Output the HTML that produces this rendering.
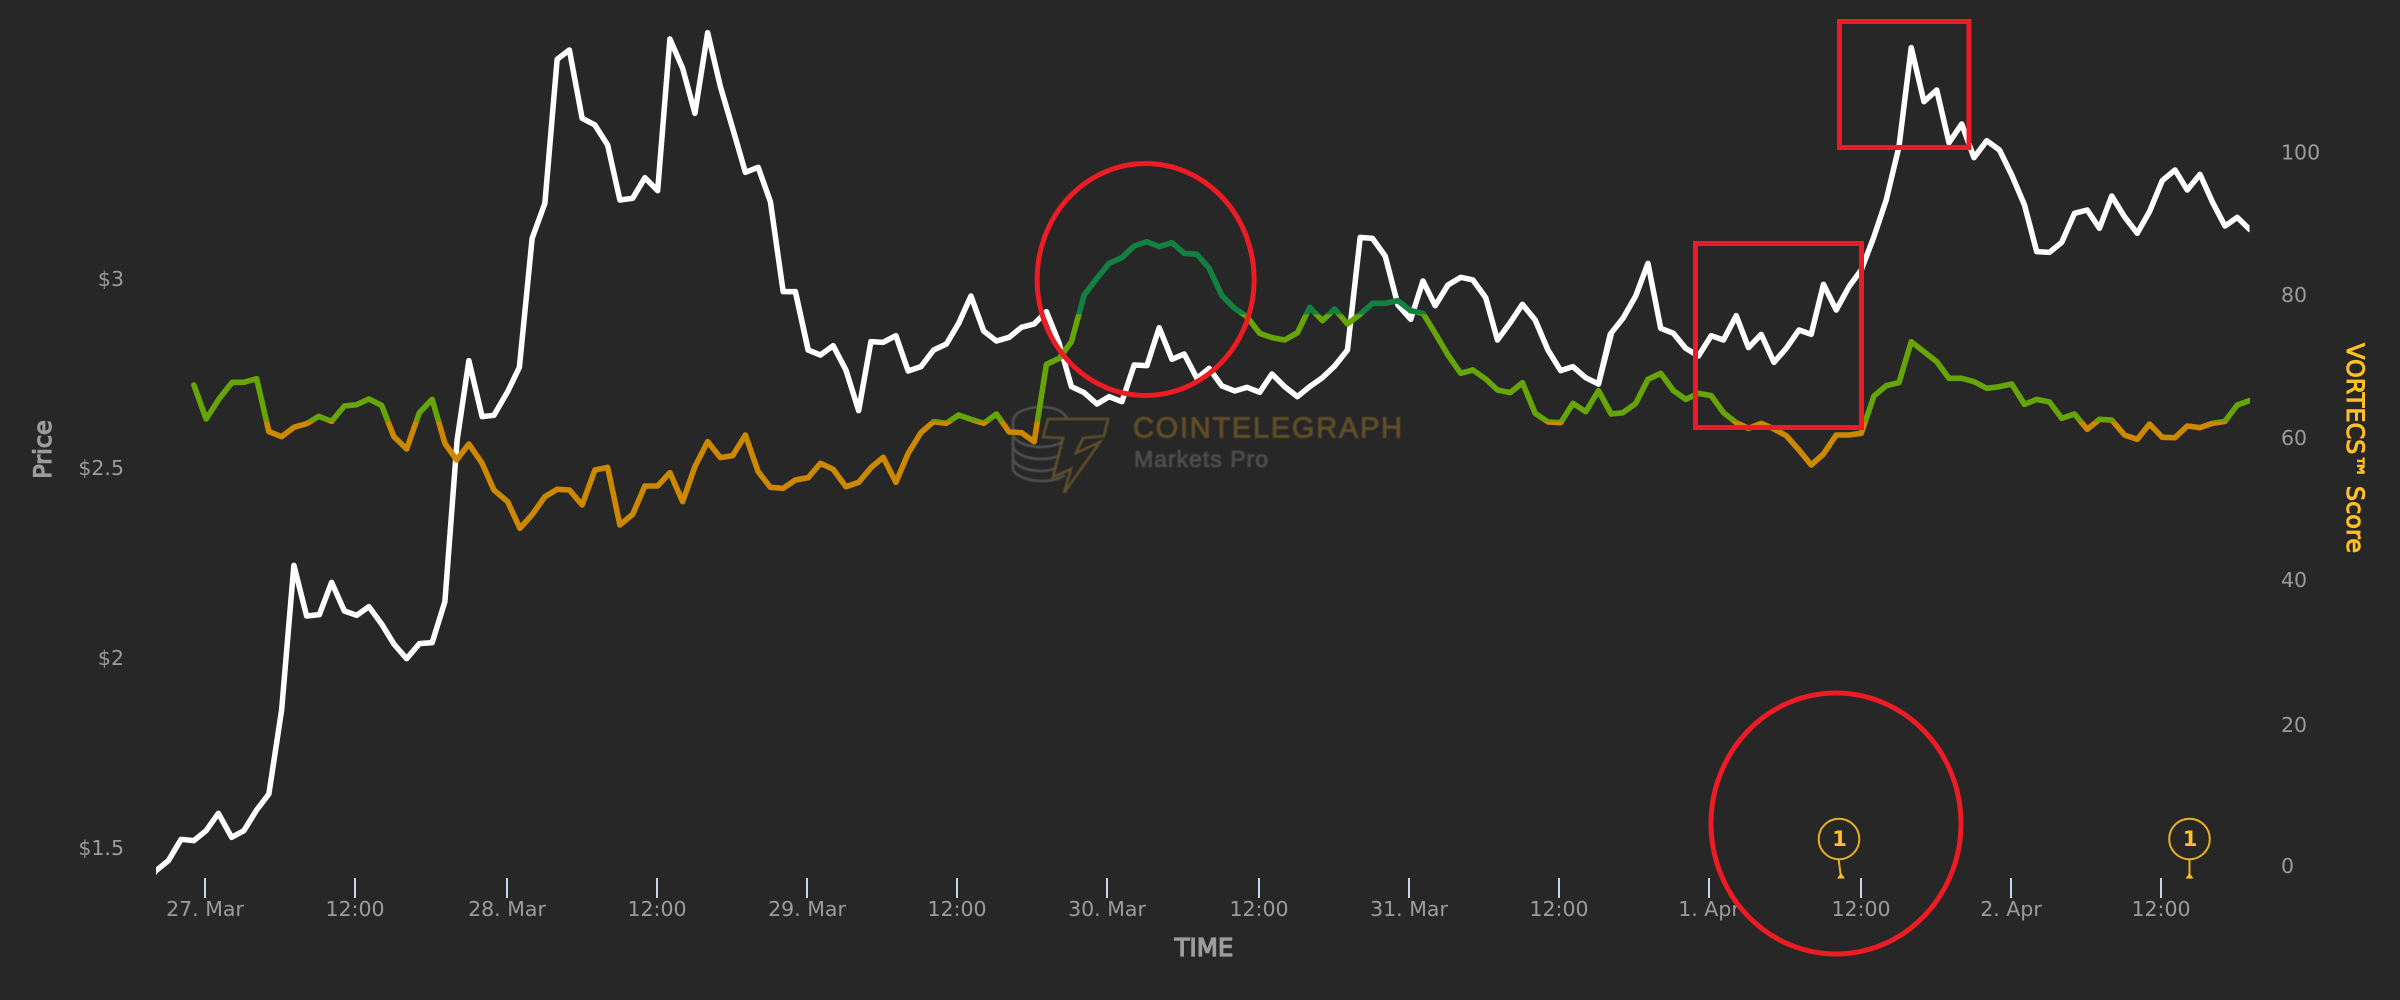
<!DOCTYPE html>
<html><head><meta charset="utf-8"><title>VORTECS chart</title>
<style>
html,body{margin:0;padding:0;background:#272727;width:2400px;height:1000px;overflow:hidden}
svg{display:block;position:absolute;left:0;top:0}
text{font-family:"DejaVu Sans","Liberation Sans",sans-serif}
.l{font-size:20.5px;fill:#9c9c9c}
.x{text-anchor:middle}
.r{text-anchor:end}
polyline{fill:none;stroke-linejoin:round;stroke-linecap:round;vector-effect:non-scaling-stroke}
</style></head><body>
<svg width="2400" height="1000" viewBox="0 0 2400 1000" xmlns="http://www.w3.org/2000/svg">
<defs>
<filter id="soft" x="-5%" y="-5%" width="110%" height="110%"><feGaussianBlur stdDeviation="0.55"/></filter>
<clipPath id="plot"><rect x="156" y="0" width="2093.5" height="880"/></clipPath>
<clipPath id="zd"><rect x="156" y="0" width="2094" height="314.3"/></clipPath>
<clipPath id="zg"><rect x="156" y="314.3" width="2094" height="107"/></clipPath>
<clipPath id="zo"><rect x="156" y="421.3" width="2094" height="400"/></clipPath>
<g id="v">
<g transform="scale(.5102,.33333)"><polyline points="380,1155 404,1257 430,1195 455,1147 478,1147 503,1136 527,1295 552,1310 576,1282 601,1271 625,1249 650,1264 675,1218 699,1214 723,1197 748,1216 772,1310 797,1347 822,1238 847,1198 872,1330 895,1380 919,1332 945,1390 968,1470 995,1505 1019,1585 1044,1542 1068,1490 1092,1468 1116,1470 1141,1515 1166,1410 1191,1402 1215,1575 1240,1543 1264,1458 1289,1458 1313,1418 1338,1505 1362,1400 1387,1325 1412,1373 1436,1367 1461,1305 1486,1415 1510,1462 1535,1465 1559,1440 1584,1433"/></g>
<g transform="translate(800,0) scale(.5102,.33333)"><polyline points="-9,1440 16,1433 40,1390 65,1408 90,1460 115,1447 139,1403 163,1372 188,1447 212,1360 237,1298 262,1265 287,1270 311,1245 335,1258 360,1270 385,1242 410,1296 434,1298 459,1325 483,1093 508,1075 532,1025 557,885 582,835 606,790 631,773 655,738 680,725 704,740 729,728 753,760 778,763 802,805 827,887 852,925 876,950 901,1000 925,1013 950,1020 975,998 999,922 1024,962 1048,927 1073,972 1098,943 1122,910 1147,910 1172,902 1197,932 1221,940 1245,1000 1270,1065 1295,1120 1319,1110 1344,1137 1367,1170 1392,1178 1416,1148 1441,1240 1466,1266 1491,1268 1515,1210 1540,1235 1565,1172 1590,1242"/></g>
<g transform="translate(1600,0) scale(.5102,.33333)"><polyline points="-3,1172 22,1242 45,1238 70,1210 94,1138 119,1120 144,1172 168,1198 193,1180 218,1187 242,1238 267,1268 291,1285 316,1270 341,1287 365,1307 390,1350 414,1395 438,1362 463,1305 488,1305 512,1300 537,1188 561,1157 586,1148 610,1025 635,1055 660,1085 684,1135 709,1135 733,1145 758,1165 783,1160 807,1152 832,1213 856,1198 881,1206 905,1255 930,1242 955,1288 979,1258 1003,1260 1028,1305 1053,1318 1077,1272 1102,1312 1127,1313 1151,1278 1176,1283 1200,1270 1225,1264 1249,1215 1273,1202"/></g>
</g>
</defs>
<rect width="2400" height="1000" fill="#272727"/>

<!-- watermark -->
<g filter="url(#soft)">
<g fill="none" stroke="#505050" stroke-width="2.6">
<path d="M1013 470V422C1013 413 1025 407 1042 407C1054 407 1064 411 1068 420"/>
<path d="M1013 435C1017 444 1030 447 1042 447C1050 447 1057 445 1062 442"/>
<path d="M1013 447C1017 456 1030 459 1042 459C1048 459 1055 458 1060 455"/>
<path d="M1013 459C1017 468 1030 471 1042 471C1048 471 1053 470 1057 467"/>
<path d="M1013 470C1017 477 1030 481 1042 481C1051 481 1059 479 1065 475"/>
</g>
<path d="M1048 419L1108 419L1104 436L1083 438L1076 453L1100 442L1064 493L1071 469L1053 477L1063 438L1043 437Z" fill="none" stroke="#5e4e2a" stroke-width="2.6"/>
<text x="1133" y="437.5" textLength="269" lengthAdjust="spacing" style="font-family:'Liberation Sans',sans-serif;font-size:29px;fill:#604e26;stroke:#604e26;stroke-width:.9">COINTELEGRAPH</text>
<text x="1134" y="467" textLength="134" lengthAdjust="spacing" style="font-family:'Liberation Sans',sans-serif;font-size:23px;fill:#4e4e4e;stroke:#4e4e4e;stroke-width:.8">Markets Pro</text>
</g>

<!-- ticks -->
<g stroke="#ccd6eb" stroke-width="2">
<path d="M205 878V898M355 878V898M507 878V898M657 878V898M807 878V898M957 878V898M1107 878V898M1259 878V898M1409 878V898M1559 878V898M1709 878V898M1861 878V898M2011 878V898M2161 878V898"/>
</g>

<!-- white price line -->
<g clip-path="url(#plot)">
<g transform="scale(.5102,.33333)"><polyline stroke="#fff" stroke-width="5.5" points="295,2632 306,2612 330,2582 355,2518 380,2522 404,2492 428,2440 454,2512 478,2492 503,2430 527,2382 552,2130 576,1696 601,1848 626,1844 650,1747 675,1833 699,1846 723,1820 748,1872 772,1932 797,1976 822,1931 847,1928 872,1805 896,1320 919,1082 945,1250 968,1246 995,1175 1018,1102 1043,715 1068,610 1092,178 1116,150 1141,355 1166,375 1191,435 1215,600 1240,595 1264,533 1289,572 1313,117 1338,205 1362,340 1387,98 1412,260 1436,385 1461,517 1486,502 1510,605 1535,875 1559,875 1584,1050 1608,1065"/></g>
<g transform="translate(800,0) scale(.5102,.33333)"><polyline stroke="#fff" stroke-width="5.5" points="-9,875 16,1050 40,1065 65,1037 90,1110 115,1232 139,1025 163,1027 188,1007 212,1113 237,1100 262,1050 287,1032 311,970 335,888 360,993 385,1023 410,1012 434,982 459,972 483,935 508,1030 532,1160 557,1178 582,1212 606,1190 631,1205 655,1095 680,1097 704,983 729,1078 753,1062 778,1135 802,1105 827,1158 852,1173 876,1162 901,1177 925,1122 950,1160 975,1190 999,1160 1024,1133 1048,1098 1073,1050 1098,712 1122,715 1147,768 1172,915 1197,958 1221,843 1245,917 1270,855 1295,832 1319,840 1344,893 1367,1020 1392,968 1416,913 1441,960 1466,1050 1491,1112 1515,1100 1540,1133 1565,1152 1590,1003"/></g>
<g transform="translate(1600,0) scale(.5102,.33333)"><polyline stroke="#fff" stroke-width="5.5" points="-3,1152 20,1003 45,955 70,888 94,790 119,985 144,1000 168,1045 193,1068 218,1007 242,1020 267,947 291,1043 316,1003 341,1087 365,1045 390,990 414,1003 438,853 463,930 488,860 512,810 537,710 561,600 586,440 610,143 635,305 660,270 684,428 709,372 733,473 758,422 783,450 807,525 832,615 856,755 881,757 905,727 930,640 955,630 979,685 1003,588 1028,650 1053,700 1077,635 1102,542 1127,510 1151,570 1176,523 1200,605 1225,678 1249,652 1273,688 1298,700"/></g>
</g>

<!-- VORTECS line zones -->
<g clip-path="url(#zd)" stroke="#128040" stroke-width="5.6"><use href="#v"/></g>
<g clip-path="url(#zg)" stroke="#66a508" stroke-width="5.6"><use href="#v"/></g>
<g clip-path="url(#zo)" stroke="#cc8800" stroke-width="5.6"><use href="#v"/></g>

<!-- y labels -->
<text class="l r" x="124" y="286">$3</text>
<text class="l r" x="124" y="475">$2.5</text>
<text class="l r" x="124" y="665">$2</text>
<text class="l r" x="124" y="855">$1.5</text>
<text class="l" x="2281" y="159.5">100</text>
<text class="l" x="2281" y="302">80</text>
<text class="l" x="2281" y="445">60</text>
<text class="l" x="2281" y="587">40</text>
<text class="l" x="2281" y="732">20</text>
<text class="l" x="2281" y="873">0</text>

<!-- x labels -->
<text class="l x" x="205" y="916">27. Mar</text>
<text class="l x" x="355" y="916">12:00</text>
<text class="l x" x="507" y="916">28. Mar</text>
<text class="l x" x="657" y="916">12:00</text>
<text class="l x" x="807" y="916">29. Mar</text>
<text class="l x" x="957" y="916">12:00</text>
<text class="l x" x="1107" y="916">30. Mar</text>
<text class="l x" x="1259" y="916">12:00</text>
<text class="l x" x="1409" y="916">31. Mar</text>
<text class="l x" x="1559" y="916">12:00</text>
<text class="l x" x="1709" y="916">1. Apr</text>
<text class="l x" x="1861" y="916">12:00</text>
<text class="l x" x="2011" y="916">2. Apr</text>
<text class="l x" x="2161" y="916">12:00</text>

<!-- axis titles -->
<text x="1204" y="956" text-anchor="middle" style="font-size:24.5px;fill:#9c9c9c;stroke:#9c9c9c;stroke-width:1.3">TIME</text>
<text transform="translate(51,449.5) rotate(-90)" text-anchor="middle" style="font-size:24px;fill:#9c9c9c;stroke:#9c9c9c;stroke-width:1.3">Price</text>
<text transform="translate(2347,448) rotate(90)" text-anchor="middle" textLength="210" lengthAdjust="spacingAndGlyphs" style="font-size:23.6px;fill:#ffc125;stroke:#ffc125;stroke-width:1">VORTECS™ Score</text>

<!-- flags -->
<g fill="none" stroke="#e8b024" stroke-width="2">
<circle cx="1839" cy="839" r="20.3"/>
<path d="M1838.7 860L1841 877"/>
<circle cx="2189.5" cy="839" r="20.3"/>
<path d="M2189.5 860V877"/>
</g>
<path d="M1838 878L1841 874L1844 878Z M2186.5 878L2189.5 874L2192.5 878Z" fill="#ffc125" stroke="#ffc125"/>
<text x="1839.5" y="846" text-anchor="middle" style="font-size:21px;font-weight:700;fill:#ffc125">1</text>
<text x="2190" y="846" text-anchor="middle" style="font-size:21px;font-weight:700;fill:#ffc125">1</text>

<!-- red annotations -->
<g fill="none" stroke="#ed1c24" stroke-width="5">
<ellipse cx="1145.6" cy="279.5" rx="108.5" ry="116"/>
<ellipse cx="1836" cy="823.5" rx="125" ry="130.5"/>
<rect x="1839.5" y="21.5" width="129.5" height="126"/>
<rect x="1695.5" y="243.5" width="166" height="184"/>
</g>
</svg>
</body></html>
